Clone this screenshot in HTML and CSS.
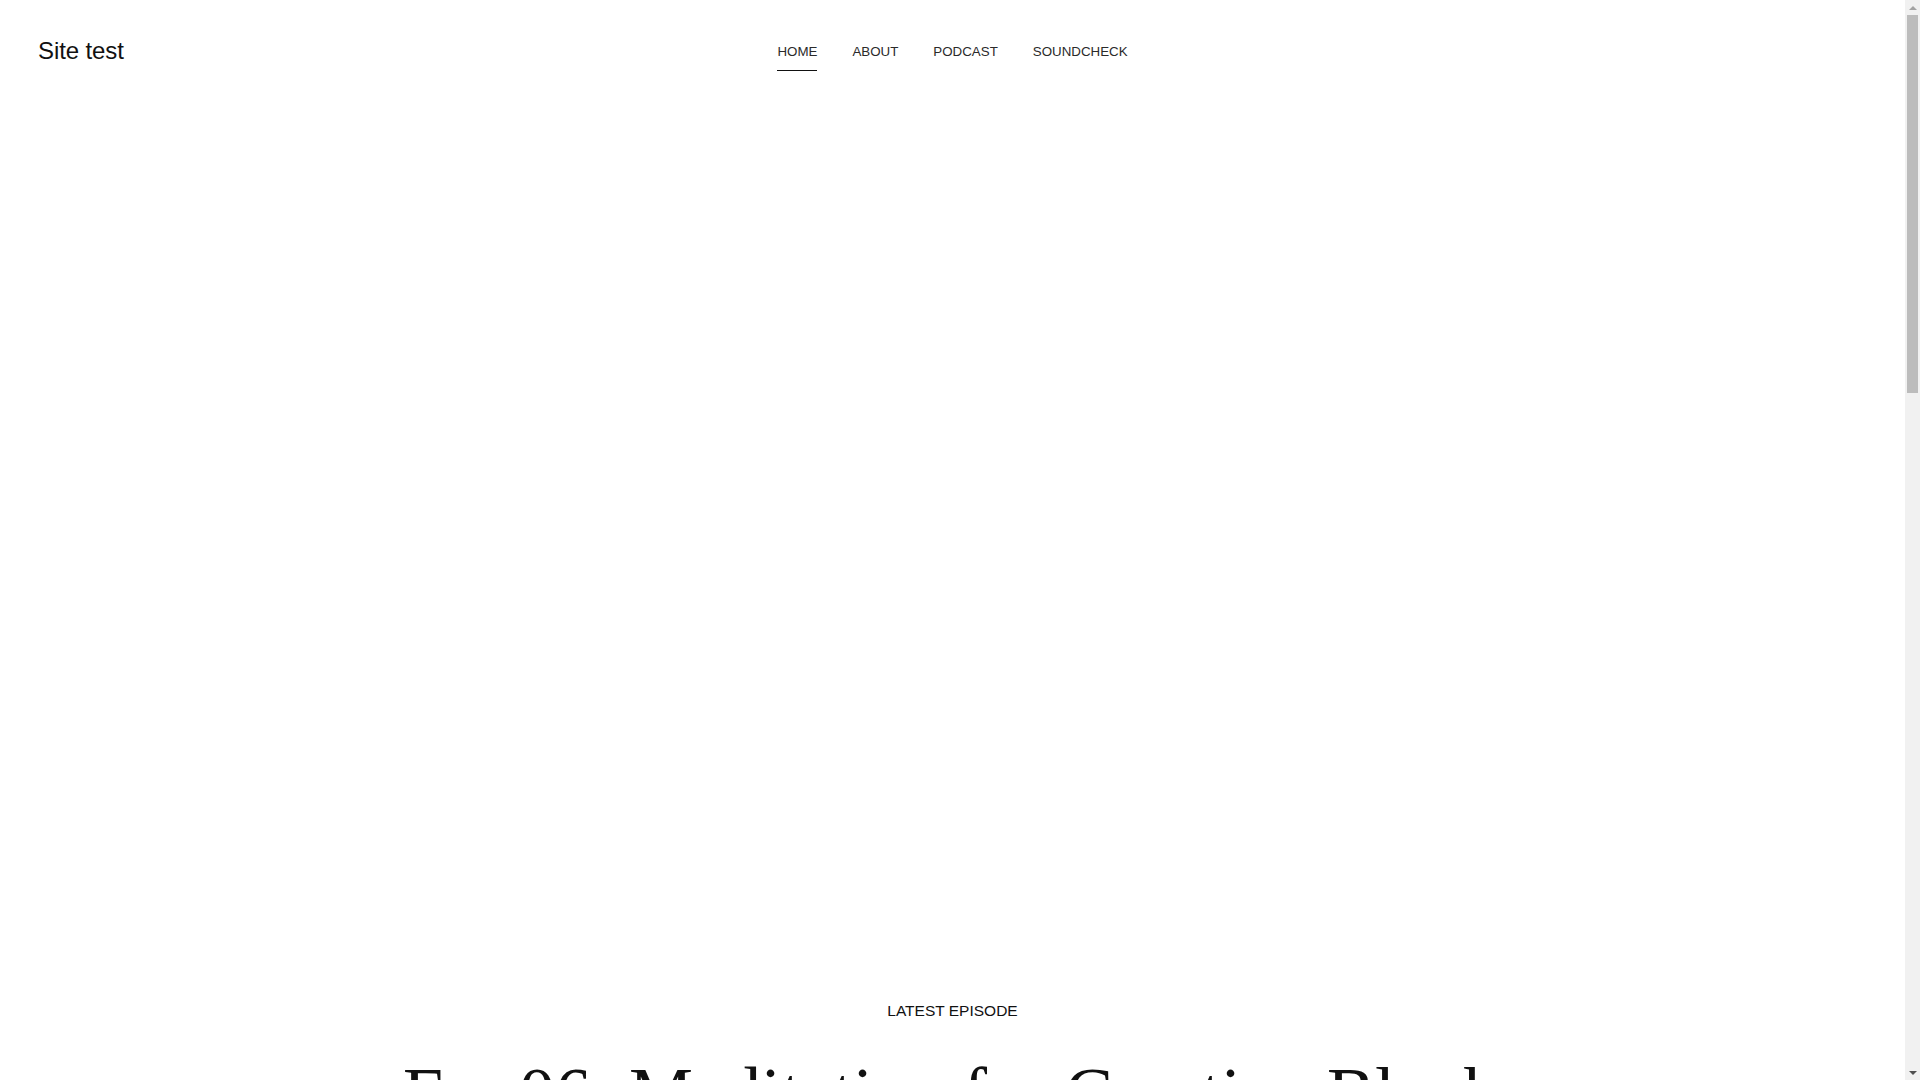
FILE: index.html
```html
<!DOCTYPE html>
<html lang="en">
<head>
<meta charset="utf-8">
<title>Site test</title>
<link rel="stylesheet" href="styles.css">
</head>
<body>
<div class="page">
  <header class="site-header">
    <div class="brand"><a class="site-title" href="#">Site test</a></div>
    <nav class="main-nav">
      <a class="nav-link active" href="#">HOME</a>
      <a class="nav-link" href="#">ABOUT</a>
      <a class="nav-link" href="#">PODCAST</a>
      <a class="nav-link" href="#">SOUNDCHECK</a>
    </nav>
    <div class="header-spacer"></div>
  </header>
  <main>
    <section class="hero"></section>
    <section class="latest">
      <p class="eyebrow">LATEST EPISODE</p>
      <h1 class="episode-title">Ep. 06: Meditation for Creative Blocks</h1>
      <div class="episode-body">
        <p class="episode-text">In this episode we explore simple meditation practices to help you move past creative blocks.</p>
      </div>
    </section>
  </main>
</div>
<div class="fake-scrollbar" aria-hidden="true">
  <div class="sb-button"><span class="sb-arrow-up"></span></div>
  <div class="sb-track"><div class="sb-thumb"></div></div>
  <div class="sb-button"><span class="sb-arrow-down"></span></div>
</div>
</body>
</html>
```

FILE: styles.css
```css
html, body {
  margin: 0;
  padding: 0;
  background: #ffffff;
}

body {
  font-family: "Liberation Sans", Arial, sans-serif;
  color: #111111;
}

.page {
  padding-right: 15px;
}

a {
  text-decoration: none;
  color: inherit;
}

.site-header {
  display: grid;
  grid-template-columns: 1fr auto 1fr;
  align-items: center;
  height: 102px;
  padding: 0 38px;
}

.site-title {
  font-size: 24px;
  color: #111111;
  letter-spacing: -0.1px;
}

.main-nav {
  display: flex;
  gap: 35px;
  align-items: center;
}

.nav-link {
  font-size: 13.33px;
  color: #2a2a2a;
  padding: 10px 0 11px;
  border-bottom: 1px solid transparent;
  margin-top: 2px;
}

.nav-link.active {
  border-bottom-color: #111111;
}

.hero {
  height: 900px;
}

.latest {
  text-align: center;
  padding-bottom: 1600px;
}

.eyebrow {
  margin: 0;
  font-size: 15.5px;
  color: #111111;
}

.episode-title {
  margin: 32px 0 0;
  padding-left: 25px;
  font-family: "Liberation Serif", "Times New Roman", serif;
  font-weight: normal;
  font-size: 72px;
  line-height: 1.15;
  color: #111111;
}

.episode-body {
  margin-top: 40px;
}

.episode-text {
  font-size: 16px;
  color: #333333;
}

/* simulated browser scrollbar */
.fake-scrollbar {
  position: fixed;
  top: 0;
  right: 0;
  width: 15px;
  height: 100vh;
  background: #f1f1f1;
  display: flex;
  flex-direction: column;
}

.sb-button {
  height: 15px;
  display: flex;
  align-items: center;
  justify-content: center;
  flex: none;
}

.sb-arrow-up {
  width: 0;
  height: 0;
  border-left: 4px solid transparent;
  border-right: 4px solid transparent;
  border-bottom: 4px solid #a3a3a3;
}

.sb-arrow-down {
  width: 0;
  height: 0;
  border-left: 4px solid transparent;
  border-right: 4px solid transparent;
  border-top: 4px solid #505050;
}

.sb-track {
  flex: 1;
  padding: 0 2px;
}

.sb-thumb {
  height: 378px;
  background: #bcbcbc;
}
```
